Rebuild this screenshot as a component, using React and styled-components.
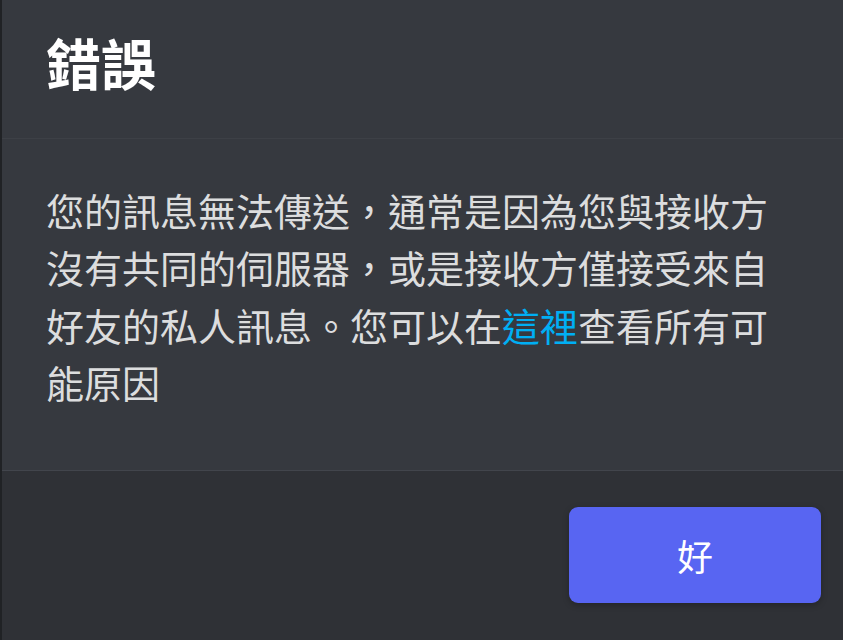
import React from "react";
import styled, { createGlobalStyle } from "styled-components";

const Global = createGlobalStyle`
  html, body { margin: 0; padding: 0; background: #2f3136; }
  body { font-family: "Noto Sans CJK TC", "Noto Sans", sans-serif; }
  * { box-sizing: border-box; }
`;

const Modal = styled.div`
  width: 843px;
  height: 640px;
  display: flex;
  flex-direction: column;
  border-left: 2px solid #202225;
  background: #36393f;
  overflow: hidden;
`;

const Header = styled.header`
  height: 139px;
  padding: 28px 44px 0;
  border-bottom: 1px solid #3d4046;
`;

const Title = styled.h1`
  margin: 0;
  font-size: 55px;
  line-height: 66px;
  font-weight: 700;
  color: #ffffff;
`;

const Body = styled.div`
  padding: 42px 50px 60px 44px;
  border-bottom: 1px solid #42454c;
`;

const Message = styled.p`
  margin: 0;
  font-size: 38px;
  line-height: 57.3px;
  color: #dcddde;
`;

const Link = styled.a`
  color: #00aff4;
  text-decoration: none;
`;

const Footer = styled.footer`
  flex: 1;
  background: #2f3136;
  display: flex;
  justify-content: flex-end;
  align-items: flex-start;
  padding: 36px 22px 0 0;
`;

const Button = styled.button`
  width: 252px;
  height: 96px;
  border: none;
  border-radius: 9px;
  background: #5865f2;
  color: #ffffff;
  font-family: inherit;
  font-size: 36px;
  box-shadow: 0 2px 6px rgba(0, 0, 0, 0.25);
`;

export default function App() {
  return (
    <>
      <Global />
      <Modal>
        <Header>
          <Title>錯誤</Title>
        </Header>
        <Body>
          <Message>
            您的訊息無法傳送，通常是因為您與接收方沒有共同的伺服器，或是接收方僅接受來自好友的私人訊息。您可以在
            <Link href="#">這裡</Link>
            查看所有可能原因
          </Message>
        </Body>
        <Footer>
          <Button>好</Button>
        </Footer>
      </Modal>
    </>
  );
}
